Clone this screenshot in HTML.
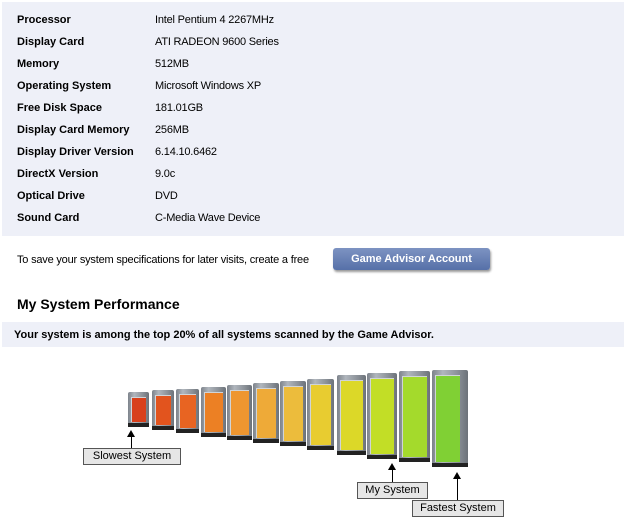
<!DOCTYPE html>
<html><head><style>
body{margin:0;width:626px;height:528px;background:#fff;font-family:"Liberation Sans",Arial,sans-serif;position:relative;overflow:hidden}
.p{position:absolute;left:2px;top:2px;width:622px;height:234px;background:#eef0f8}
.r{position:absolute;font-size:11px;color:#000;letter-spacing:-0.2px}
.l{left:17px;font-weight:bold;letter-spacing:0}
.v{left:155px}
.bar{position:absolute;background:linear-gradient(90deg,#7d838b,#b0b6bd 30%,#8c9299 70%,#6c7279);border-radius:2px 2px 0 0}
.bar i{position:absolute;left:3px;right:3px;top:5px;bottom:5px;border-left:1px solid #d0d4d8;border-top:1px solid #d0d4d8}
.bar b{position:absolute;left:0;right:0;bottom:0;height:4px;background:#222}
.lab{position:absolute;background:#e6e6e6;border:1px solid #555;font-size:11px;height:15px;line-height:15px;text-align:center}
.ar{position:absolute;width:1px;background:#000}
.ah{position:absolute;width:0;height:0;border-left:4px solid transparent;border-right:4px solid transparent;border-bottom:7px solid #000}
</style></head><body>
<div class="p"></div>
<div class="r l" style="top:14px">Processor</div><div class="r v" style="top:14px">Intel Pentium 4 2267MHz</div>
<div class="r l" style="top:36px">Display Card</div><div class="r v" style="top:36px">ATI RADEON 9600 Series</div>
<div class="r l" style="top:58px">Memory</div><div class="r v" style="top:58px">512MB</div>
<div class="r l" style="top:80px">Operating System</div><div class="r v" style="top:80px">Microsoft Windows XP</div>
<div class="r l" style="top:102px">Free Disk Space</div><div class="r v" style="top:102px">181.01GB</div>
<div class="r l" style="top:124px">Display Card Memory</div><div class="r v" style="top:124px">256MB</div>
<div class="r l" style="top:146px">Display Driver Version</div><div class="r v" style="top:146px">6.14.10.6462</div>
<div class="r l" style="top:168px">DirectX Version</div><div class="r v" style="top:168px">9.0c</div>
<div class="r l" style="top:190px">Optical Drive</div><div class="r v" style="top:190px">DVD</div>
<div class="r l" style="top:212px">Sound Card</div><div class="r v" style="top:212px">C-Media Wave Device</div>
<div class="r" style="left:17px;top:254px">To save your system specifications for later visits, create a free</div>
<div style="position:absolute;left:333px;top:248px;width:157px;height:22px;background:linear-gradient(#7d93c2,#5670a8);border-radius:3px;box-shadow:1px 2px 2px #999;color:#fff;font-weight:bold;font-size:11px;line-height:22px;text-align:center">Game Advisor Account</div>
<div style="position:absolute;left:17px;top:296px;font-size:14px;font-weight:bold">My System Performance</div>
<div style="position:absolute;left:2px;top:322px;width:622px;height:25px;background:#eef0f8"></div>
<div class="r" style="left:14px;top:329px;font-weight:bold;letter-spacing:0">Your system is among the top 20% of all systems scanned by the Game Advisor.</div>
<div class="bar" style="left:128px;top:392px;width:21px;height:35px"><i style="background:#d8401c"></i><b></b></div>
<div class="bar" style="left:152px;top:390px;width:22px;height:40px"><i style="background:#e2541e"></i><b></b></div>
<div class="bar" style="left:176px;top:389px;width:23px;height:44px"><i style="background:#e86422"></i><b></b></div>
<div class="bar" style="left:201px;top:387px;width:25px;height:50px"><i style="background:#ec8024"></i><b></b></div>
<div class="bar" style="left:227px;top:385px;width:25px;height:55px"><i style="background:#ee9630"></i><b></b></div>
<div class="bar" style="left:253px;top:383px;width:26px;height:60px"><i style="background:#eeaa38"></i><b></b></div>
<div class="bar" style="left:280px;top:381px;width:26px;height:65px"><i style="background:#ecbc3c"></i><b></b></div>
<div class="bar" style="left:307px;top:379px;width:27px;height:71px"><i style="background:#e8cc30"></i><b></b></div>
<div class="bar" style="left:337px;top:375px;width:29px;height:80px"><i style="background:#dcd828"></i><b></b></div>
<div class="bar" style="left:367px;top:373px;width:30px;height:86px"><i style="background:#c2de26"></i><b></b></div>
<div class="bar" style="left:399px;top:371px;width:31px;height:91px"><i style="background:#a4da2c"></i><b></b></div>
<div class="bar" style="left:432px;top:370px;width:36px;height:97px"><i style="background:#80d034;right:8px"></i><b></b></div>
<div class="ah" style="left:127px;top:430px"></div><div class="ar" style="left:131px;top:436px;height:12px"></div>
<div class="lab" style="left:83px;top:448px;width:96px">Slowest System</div>
<div class="ah" style="left:388px;top:463px"></div><div class="ar" style="left:392px;top:469px;height:13px"></div>
<div class="lab" style="left:357px;top:482px;width:69px">My System</div>
<div class="ah" style="left:453px;top:472px"></div><div class="ar" style="left:457px;top:478px;height:22px"></div>
<div class="lab" style="left:412px;top:500px;width:90px">Fastest System</div>
</body></html>
